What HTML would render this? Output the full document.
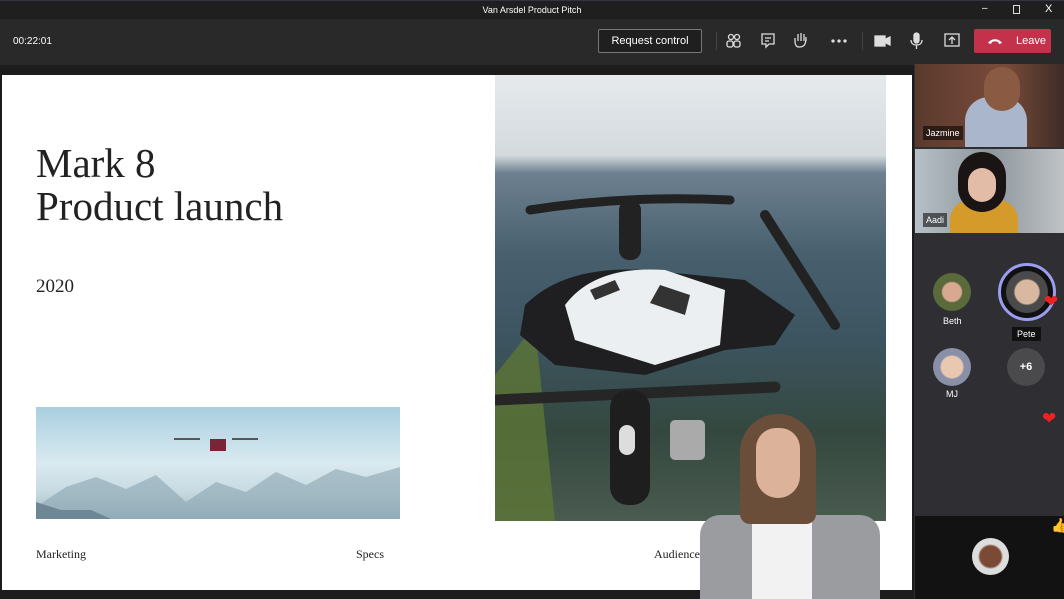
<!DOCTYPE html>
<html><head><meta charset="utf-8"><style>
*{margin:0;padding:0;box-sizing:border-box}
body{width:1064px;height:599px;overflow:hidden;background:#1c1c1c;font-family:"Liberation Sans",sans-serif;position:relative}
.abs{position:absolute}
.serif{font-family:"Liberation Serif",serif;color:#222}
.lbl{color:#fff;font-size:9px}
</style></head><body>
<div class="abs" style="left:0;top:0;width:1064px;height:19px;background:#1f1f1f;border-top:1px solid #334"></div>
<div class="abs lbl" style="left:0;width:1064px;top:5px;text-align:center">Van Arsdel Product Pitch</div>
<div class="abs lbl" style="left:982px;top:3px;font-size:10px">–</div>
<div class="abs" style="left:1013px;top:5px;width:7px;height:9px;border:1px solid #ddd"></div>
<div class="abs lbl" style="left:1045px;top:3px;font-size:11px">X</div>
<div class="abs" style="left:0;top:19px;width:1064px;height:46px;background:#292929"></div>
<div class="abs lbl" style="left:13px;top:36px;font-size:10px">00:22:01</div>
<div class="abs" style="left:598px;top:29px;width:104px;height:24px;border:1px solid #777;border-radius:2px;color:#fff;font-size:11px;text-align:center;line-height:22px;background:#1f1f1f">Request control</div>
<div class="abs" style="left:716px;top:32px;width:1px;height:18px;background:#444"></div>
<div class="abs" style="left:862px;top:32px;width:1px;height:18px;background:#444"></div>
<svg class="abs" style="left:722px;top:30px" width="240" height="22" fill="none" stroke="#ddd" stroke-width="1.3">
<circle cx="9" cy="7" r="2.5"/><circle cx="15" cy="7" r="2.5"/><rect x="5" y="11" width="6" height="6" rx="2"/><rect x="12" y="11" width="6" height="6" rx="2"/>
<path d="M40 4h12v10h-5l-3 3v-3h-4z"/><path d="M43 8h6M43 11h4"/>
<path d="M77 17c-3 0-4-3-4-6V8M76 11V4M79 11V3M82 11V4M84 11V7c0 8-2 10-7 10"/>
<circle cx="111" cy="11" r="1" fill="#ddd"/><circle cx="117" cy="11" r="1" fill="#ddd"/><circle cx="123" cy="11" r="1" fill="#ddd"/>
<rect x="153" y="6" width="10" height="10" fill="#ddd"/><path d="M164 9l4-2v8l-4-2z" fill="#ddd"/>
<rect x="192" y="3" width="5" height="10" rx="2.5" fill="#ddd"/><path d="M189 10c0 4 3 5 5.5 5s5.5-1 5.5-5M194.5 15v4"/>
<rect x="223" y="4" width="14" height="12"/><path d="M230 14V8M227 10l3-3 3 3"/>
</svg>
<div class="abs" style="left:974px;top:29px;width:77px;height:24px;background:#c4314b;border-radius:2px;color:#fff;font-size:11px;line-height:24px;padding-left:42px">Leave</div>
<svg class="abs" style="left:987px;top:37px" width="16" height="8"><path d="M1 6c3-5 11-5 14 0l-3 1-1-2c-2-1-4-1-6 0l-1 2z" fill="#fff"/></svg>

<!-- slide -->
<div class="abs" style="left:2px;top:75px;width:910px;height:515px;background:#fff"></div>
<div class="abs serif" style="left:36px;top:142px;font-size:41px;line-height:43px">Mark 8<br>Product launch</div>
<div class="abs serif" style="left:36px;top:276px;font-size:19px">2020</div>
<div class="abs" style="left:36px;top:407px;width:364px;height:112px;background:linear-gradient(#a9cfe0,#d9eaf0 50%,#c8dbe2 75%,#9fb6c0)"></div>
<svg class="abs" style="left:36px;top:407px" width="364" height="112"><path d="M0 100 L30 80 60 70 90 82 120 68 150 95 180 75 210 85 240 65 270 78 300 62 330 70 364 60V112H0Z" fill="#8aa5b0" opacity=".6"/><path d="M0 112V95l25 8 30 0 20 9z" fill="#6d8794"/>
<rect x="174" y="32" width="16" height="12" fill="#7a2438"/><path d="M138 32h26M196 32h26" stroke="#555" stroke-width="2"/></svg>
<div class="abs" style="left:495px;top:75px;width:391px;height:446px;background:linear-gradient(#e6eaed,#d3dade 18%,#6d8090 22%,#48606e 40%,#3c5460 60%,#34483f 80%,#4a5b50)"></div>
<svg class="abs" style="left:495px;top:75px" width="391" height="446">
<path d="M0 300L40 250 60 446H0z" fill="#5c7536" opacity=".8"/>
<path d="M35 135Q130 120 235 125" stroke="#222" stroke-width="9" stroke-linecap="round" fill="none"/>
<path d="M270 140L340 250" stroke="#222" stroke-width="10" stroke-linecap="round"/>
<rect x="124" y="125" width="22" height="60" rx="10" fill="#222"/>
<path d="M30 230Q70 190 150 195L250 205 300 240 280 270 230 275 150 300 60 290 25 260Z" fill="#1f1f21"/>
<path d="M70 230Q100 190 170 195L230 215 225 270 160 290 80 265Z" fill="#eceff1"/>
<path d="M95 215l25-10 5 10-25 10zM165 210l30 10-5 20-35-12z" fill="#333"/>
<path d="M0 325L280 312" stroke="#262626" stroke-width="11" stroke-linecap="round"/>
<rect x="115" y="315" width="40" height="115" rx="18" fill="#1e1e1e"/>
<rect x="124" y="350" width="16" height="30" rx="8" fill="#ddd"/>
<rect x="175" y="345" width="35" height="40" rx="5" fill="#aaa"/>
</svg>
<div class="abs serif" style="left:36px;top:547px;font-size:12px">Marketing</div>
<div class="abs serif" style="left:356px;top:547px;font-size:12px">Specs</div>
<div class="abs serif" style="left:654px;top:547px;font-size:12px">Audience</div>
<!-- presenter -->
<div class="abs" style="left:700px;top:515px;width:180px;height:84px;background:#9a9ca0;border-radius:20px 20px 0 0"></div>
<div class="abs" style="left:752px;top:520px;width:60px;height:79px;background:#f2f2f2"></div>
<div class="abs" style="left:740px;top:414px;width:76px;height:110px;background:#6b4e3a;border-radius:38px 38px 10px 10px"></div>
<div class="abs" style="left:756px;top:428px;width:44px;height:70px;background:#dcb39a;border-radius:22px 22px 24px 24px"></div>

<!-- right panel -->
<div class="abs" style="left:914px;top:64px;width:150px;height:535px;background:#2e2e33"></div>
<div class="abs" style="left:915px;top:64px;width:149px;height:83px;background:linear-gradient(90deg,#5a3a2e,#7a4b3a 60%,#3d2c26)"></div>
<div class="abs" style="left:965px;top:97px;width:62px;height:50px;background:#a9b6cc;border-radius:24px 24px 0 0"></div>
<div class="abs" style="left:984px;top:67px;width:36px;height:44px;background:#8a5a42;border-radius:18px"></div>
<div class="abs lbl" style="left:923px;top:126px;background:rgba(0,0,0,.55);padding:2px 3px">Jazmine</div>
<div class="abs" style="left:915px;top:149px;width:149px;height:84px;background:linear-gradient(90deg,#b7c0c6,#8d969c 50%,#c0c3c6)"></div>
<div class="abs" style="left:950px;top:200px;width:68px;height:33px;background:#d49a2a;border-radius:20px 20px 0 0"></div>
<div class="abs" style="left:958px;top:152px;width:48px;height:60px;background:#1a1414;border-radius:24px"></div>
<div class="abs" style="left:968px;top:168px;width:28px;height:34px;background:#e2bca6;border-radius:14px"></div>
<div class="abs lbl" style="left:923px;top:213px;background:rgba(0,0,0,.55);padding:2px 3px">Aadi</div>
<div class="abs" style="left:933px;top:273px;width:38px;height:38px;border-radius:50%;background:radial-gradient(#d8a890 35%,#5b6a3a 40%)"></div>
<div class="abs lbl" style="left:943px;top:316px">Beth</div>
<div class="abs" style="left:998px;top:263px;width:58px;height:58px;border-radius:50%;border:3px solid #9b9ef0;background:#111"></div>
<div class="abs" style="left:1006px;top:271px;width:42px;height:42px;border-radius:50%;background:radial-gradient(#d8b8a0 40%,#4a4a4a 45%)"></div>
<div class="abs lbl" style="left:1012px;top:327px;background:#111;padding:2px 5px">Pete</div>
<div class="abs" style="left:933px;top:348px;width:38px;height:38px;border-radius:50%;background:radial-gradient(#e8c8b0 40%,#8a8fa8 45%)"></div>
<div class="abs lbl" style="left:946px;top:389px">MJ</div>
<div class="abs" style="left:1007px;top:348px;width:38px;height:38px;border-radius:50%;background:#4a4a4c;color:#fff;font-size:11px;font-weight:bold;text-align:center;line-height:38px">+6</div>
<div class="abs" style="left:1044px;top:292px;color:#e22;font-size:17px">❤</div>
<div class="abs" style="left:1042px;top:409px;color:#e22;font-size:17px">❤</div>
<div class="abs" style="left:915px;top:516px;width:149px;height:83px;background:#121212"></div>
<div class="abs" style="left:972px;top:538px;width:37px;height:37px;border-radius:50%;background:radial-gradient(#7a4a34 40%,#ddd 48%)"></div>
<div class="abs" style="left:1051px;top:517px;color:#f2b900;font-size:14px">👍</div>
</body></html>
